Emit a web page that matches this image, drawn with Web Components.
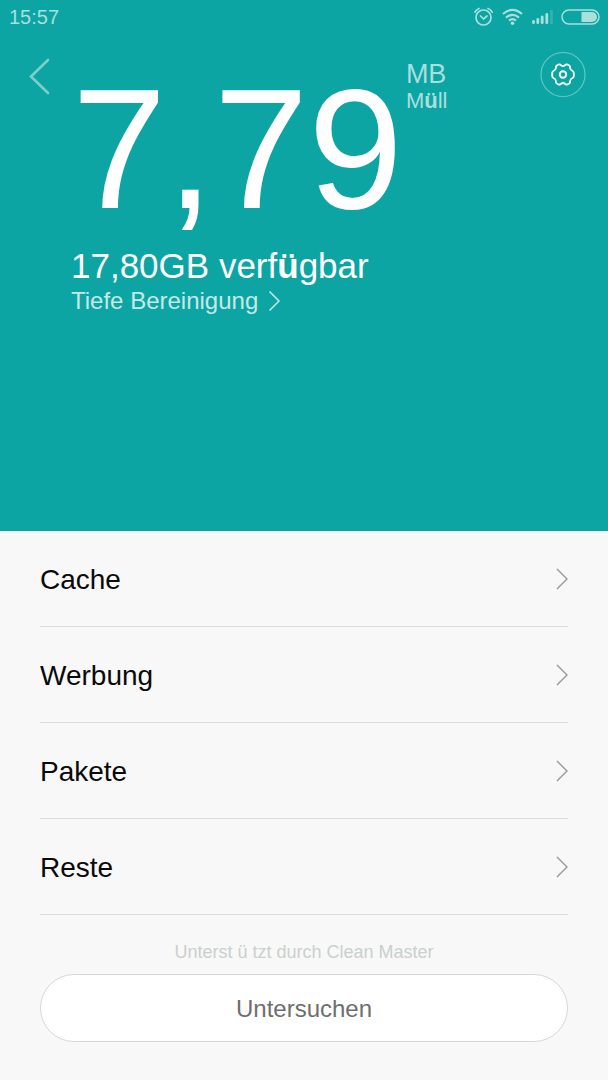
<!DOCTYPE html>
<html lang="de">
<head>
<meta charset="utf-8">
<meta name="viewport" content="width=device-width, initial-scale=1">
<title>Cleaner</title>
<style>
  body { margin: 0; background: #f8f8f8; font-family: "Liberation Sans", Arial, sans-serif; }
</style>
</head>
<body>
<cleaner-app></cleaner-app>

<template id="tpl-app">
  <style>
    :host { display: flex; flex-direction: column; min-height: 100vh; }
    header { flex: 1; background: #0ca5a3; color: #fff; }
    nav { padding: 0 40px; }
  </style>
  <header>
    <status-bar>15:57</status-bar>
    <junk-summary>
      <span slot="value">7,79</span>
      <span slot="unit">MB</span>
      <span slot="kind">M<b>ü</b>ll</span>
      <span slot="free">17,80GB verf<b>ü</b>gbar</span>
      <span slot="deep">Tiefe Bereinigung</span>
    </junk-summary>
  </header>
  <nav>
    <category-row>Cache</category-row>
    <category-row>Werbung</category-row>
    <category-row>Pakete</category-row>
    <category-row>Reste</category-row>
  </nav>
  <scan-footer>
    <span slot="credit">Unterst ü tzt durch Clean Master</span>
    Untersuchen
  </scan-footer>
</template>

<template id="tpl-status">
  <style>
    :host { display: flex; align-items: center; height: 34px; padding: 0 8px 0 9px; gap: 8px; color: #a9dfdd; font-size: 20px; line-height: 24px; }
    .time { flex: 1; }
    svg { display: block; fill: none; stroke: currentColor; }
  </style>
  <span class="time"><slot></slot></span>
  <svg width="20" height="20" viewBox="0 0 20 20" stroke-width="1.7" stroke-linecap="round" stroke-linejoin="round" aria-hidden="true">
    <circle cx="9.500" cy="10.500" r="7.500"/><path d="M6.500 9l3 3 3.500-3M1 5.200Q2.200 2.600 5 1.500M18.200 5.200Q17 2.600 14 1.500"/>
  </svg>
  <svg width="21" height="20" viewBox="0 0 21 20" stroke-width="2.200" aria-hidden="true">
    <path d="M1 7Q10.500 -1.200 20 7M4 10.600Q10.500 5 17 10.600M7 13.700Q10.500 10.700 14 13.700"/>
    <circle cx="10.500" cy="16.300" r="1.800" fill="currentColor" stroke="none"/>
  </svg>
  <svg width="22" height="20" viewBox="0 0 22 20" stroke-width="2.800" stroke-linecap="round" aria-hidden="true">
    <path d="M2.500 14.500v1.200M6.800 12.500v3.200M11.200 10v5.700M15.800 7.500v8.200"/>
    <path d="M20.500 3v14" stroke-linecap="butt" stroke-width="2.600" opacity=".25"/>
  </svg>
  <svg width="39" height="20" viewBox="0 0 39 20" stroke-width="1.500" aria-hidden="true">
    <rect x="1" y="3" width="37" height="14" rx="7"/>
    <path d="M20.500 5H31a5 5 0 0 1 0 10H20.500z" fill="currentColor" stroke="none"/>
  </svg>
</template>

<template id="tpl-summary">
  <style>
    :host { display: block; padding: 18px 22px 24px 0; }
    .top { display: grid; grid-template-columns: 72px auto 1fr auto; align-items: start; }
    button { padding: 0; border: 0; background: none; color: inherit; cursor: pointer; }
    .back { height: 48px; padding-left: 28px; text-align: left; color: #7dcecb; }
    .gear { width: 46px; height: 46px; }
    svg { display: block; fill: none; stroke: currentColor; }
    .value { padding-top: 11px; font-size: 170px; line-height: 172px; }
    .unit { padding: 8px 0 0 3px; font-size: 27px; line-height: 28px; color: #aadfde; }
    .kind { font-size: 22px; line-height: 26px; }
    .texts { padding: 11px 0 0 71px; }
    .free { font-size: 35px; line-height: 40px; }
    a { display: inline-flex; align-items: center; gap: 10px; margin-top: 1px; font-size: 24px; line-height: 28px; color: #c5e9e8; text-decoration: none; }
  </style>
  <div class="top">
    <button class="back" aria-label="Zurück">
      <svg width="24" height="40" viewBox="0 0 24 40" stroke-width="2.600" stroke-linecap="round"><path d="M20 4L3 20.500 20 37"/></svg>
    </button>
    <div class="value"><slot name="value"></slot></div>
    <div class="unit"><slot name="unit"></slot><div class="kind"><slot name="kind"></slot></div></div>
    <button class="gear" aria-label="Einstellungen">
      <svg width="46" height="46" viewBox="0 0 46 46">
        <circle cx="23" cy="22.500" r="22" stroke="#65c5c3" stroke-width="1.200"/>
        <path stroke-width="1.800" stroke-linejoin="round" d="M18.500 12.600Q20 12 21 13.200Q23 14.800 25 13.200Q26 12 27.500 12.600L29.500 13.800Q30.300 14.500 30.100 16Q30.300 18.200 32.600 19Q33.800 19.700 33.800 21V24Q33.800 25.300 32.600 26Q30.300 26.800 30.100 29Q30.300 30.500 29.500 31.200L27.500 32.400Q26 33 25 31.800Q23 30.200 21 31.800Q20 33 18.500 32.400L16.500 31.200Q15.700 30.500 15.900 29Q15.700 26.800 13.400 26Q12.200 25.300 12.200 24V21Q12.200 19.700 13.400 19Q15.700 18.200 15.900 16Q15.700 14.500 16.500 13.800Z"/>
        <circle cx="23" cy="22.500" r="3.200" stroke-width="2"/>
      </svg>
    </button>
  </div>
  <div class="texts">
    <div class="free"><slot name="free"></slot></div>
    <a href="#deep"><slot name="deep"></slot>
      <svg width="13" height="22" viewBox="0 0 13 22" stroke-width="1.500"><path d="M1.500 1.500L11 11 1.500 20.500"/></svg>
    </a>
  </div>
</template>

<template id="tpl-row">
  <style>
    :host { display: block; border-bottom: 1px solid #dcdedd; }
    a { display: flex; align-items: center; justify-content: space-between; height: 95px; color: #0a0a0a; font-size: 28px; line-height: 32px; text-decoration: none; }
    .label { padding-top: 3px; }
    svg { display: block; fill: none; stroke: #969998; }
  </style>
  <a href="#details"><span class="label"><slot></slot></span>
    <svg width="12" height="22" viewBox="0 0 12 22" stroke-width="1.400" aria-hidden="true"><path d="M1 1L11 11 1 21"/></svg>
  </a>
</template>

<template id="tpl-footer">
  <style>
    :host { display: block; padding: 27px 40px 38px; text-align: center; }
    .credit { font-size: 18px; line-height: 20px; color: #c9d0ce; }
    button { display: block; box-sizing: border-box; width: 100%; height: 68px; margin-top: 12px; padding: 2px 0 0; border: 1px solid #d3d9d7; border-radius: 34px; background: #fff; color: #6c6f6e; font: 24px/28px "Liberation Sans", Arial, sans-serif; cursor: pointer; }
  </style>
  <div class="credit"><slot name="credit"></slot></div>
  <button><slot></slot></button>
</template>

<script>
  const define = (name, templateId) => customElements.define(name, class extends HTMLElement {
    constructor() {
      super();
      this.attachShadow({ mode: "open" })
        .append(document.getElementById(templateId).content.cloneNode(true));
    }
  });
  define("status-bar", "tpl-status");
  define("junk-summary", "tpl-summary");
  define("category-row", "tpl-row");
  define("scan-footer", "tpl-footer");
  define("cleaner-app", "tpl-app");
</script>
</body>
</html>
